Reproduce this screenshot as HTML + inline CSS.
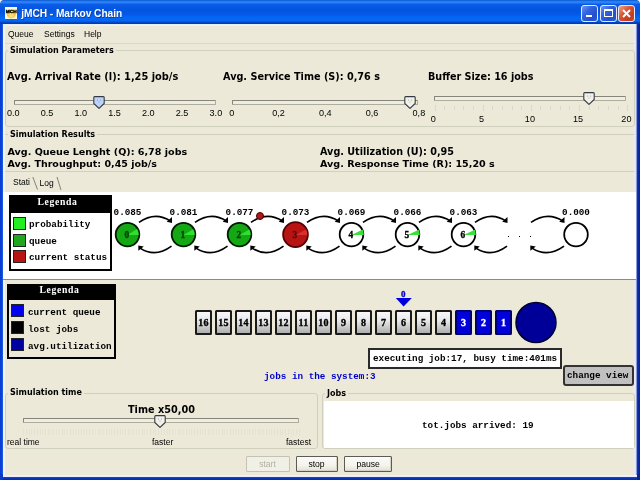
<!DOCTYPE html>
<html><head><meta charset="utf-8"><title>jMCH - Markov Chain</title>
<style>
html,body{margin:0;padding:0;}
body{width:640px;height:480px;overflow:hidden;position:relative;background:#0a3cc8;font-family:"DejaVu Sans Condensed","Liberation Sans",sans-serif;font-size:8.5px;color:#000;}
.a{position:absolute;white-space:nowrap;line-height:1;}
.t{font-family:"Liberation Sans",sans-serif;font-size:8.5px;color:#000;}
.m{font-family:"Liberation Mono",monospace;font-weight:bold;font-size:9.3px;}
.s{font-family:"Liberation Serif",serif;font-weight:bold;}
.grp{position:absolute;border:1px solid #d0d0bf;border-radius:3px;box-sizing:border-box;}
.gl{position:absolute;background:#ece9d8;padding:0 2px;font-family:"DejaVu Sans Condensed","Liberation Sans",sans-serif;font-weight:bold;font-size:8.95px;line-height:1;white-space:nowrap;}
.big{font-family:"DejaVu Sans","Liberation Sans",sans-serif;font-size:9.8px;font-weight:bold;}
.track{position:absolute;height:5px;box-sizing:border-box;border:1px solid #86857a;border-bottom-color:#aeac9c;border-right-color:#aeac9c;background:#efede0;border-radius:1px;}
.sl{position:absolute;font-size:9.1px;line-height:1;transform:translateX(-50%);white-space:nowrap;font-family:"Liberation Sans",sans-serif;color:#000;}
.qb{position:absolute;top:309.7px;width:17px;height:25.8px;box-sizing:border-box;border:2px solid #1a1a1a;border-radius:1.5px;background:linear-gradient(#f8f8f8,#e9e9e9 40%,#aeaeae);text-align:center;font-family:"Liberation Serif",serif;font-weight:bold;font-size:10px;line-height:21.6px;letter-spacing:0.2px;-webkit-text-stroke:0.35px currentColor;}
.qb.on{background:#0000dd;color:#fff;border-color:#000070;}
.btn{position:absolute;top:455.5px;height:16px;box-sizing:border-box;border:1px solid #5c5b55;background:linear-gradient(#fbfbf8,#f4f3ec 60%,#e3e1d4);box-shadow:inset -1px -1px 0 #d4d2c4;text-align:center;font-size:8.6px;line-height:14.6px;font-family:"Liberation Sans",sans-serif;border-radius:1px;color:#000;}
.sq{position:absolute;width:13px;height:13px;box-sizing:border-box;border:1px solid #222;}
</style></head><body><div id="win" style="position:absolute;left:0;top:0;width:640px;height:480px;will-change:transform;filter:blur(0.4px);">
<div class="a" style="left:0;top:0;width:640px;height:480px;background:#ece9d8;"></div>
<div class="a" style="left:0;top:0;width:640px;height:24px;background:linear-gradient(#0a58cc 0px,#2a7ef5 1.5px,#2a80f8 2.5px,#0a5ce6 4.5px,#0355e0 10px,#0558e6 14px,#0468f8 18px,#0465f0 21px,#0345c0 22.5px,#0038a8 24px);"></div>
<div class="a" style="left:21.2px;top:8.6px;font-family:'Liberation Sans',sans-serif;font-weight:bold;font-size:10.2px;letter-spacing:-0.05px;color:#fff;text-shadow:0.6px 0.6px 0.5px rgba(10,40,140,0.7);">jMCH - Markov Chain</div>
<svg class="a" style="left:5px;top:6.8px" width="12.3" height="12" viewBox="0 0 12.3 12"><rect x="0" y="0" width="12.3" height="12" fill="#fdf8e2"/><circle cx="6.3" cy="6.8" r="4.6" fill="#f3c63c"/><circle cx="6.3" cy="8.2" r="2.6" fill="#f8dc78"/><text x="6.15" y="6.3" font-family="Liberation Sans,sans-serif" font-weight="bold" font-size="4" text-anchor="middle" textLength="11" lengthAdjust="spacingAndGlyphs" fill="#000" stroke="#000" stroke-width="0.3">MCH</text></svg>
<div class="a" style="left:581.3px;top:5px;width:17px;height:17px;box-sizing:border-box;border:1px solid #e4ecfc;border-radius:3px;background:linear-gradient(135deg,#6a96f4 0%,#3564e0 35%,#2450d0 70%,#2a58d8 100%);"></div>
<div class="a" style="left:599.7px;top:5px;width:17px;height:17px;box-sizing:border-box;border:1px solid #e4ecfc;border-radius:3px;background:linear-gradient(135deg,#6a96f4 0%,#3564e0 35%,#2450d0 70%,#2a58d8 100%);"></div>
<div class="a" style="left:618px;top:5px;width:17px;height:17px;box-sizing:border-box;border:1px solid #e4ecfc;border-radius:3px;background:linear-gradient(135deg,#f0a888 0%,#dc5434 40%,#c43c1c 75%,#d04828 100%);"></div>
<div class="a" style="left:586px;top:14.8px;width:5.5px;height:2.7px;background:#fff;"></div>
<div class="a" style="left:604px;top:9.3px;width:8.7px;height:8.2px;box-sizing:border-box;border:1px solid #fff;border-top-width:2.2px;"></div>
<svg class="a" style="left:618px;top:5px" width="17" height="17" viewBox="0 0 17 17"><path d="M5 5 L12 12 M12 5 L5 12" stroke="#fff" stroke-width="1.9" stroke-linecap="butt"/></svg>
<svg class="a" style="left:0;top:0" width="640" height="6" viewBox="0 0 640 6"><path d="M0 0 H3 Q0.6 0.6 0 3.2 Z" fill="#f4f2ea"/><path d="M640 0 H637 Q639.4 0.6 640 3.2 Z" fill="#f4f2ea"/></svg>
<div class="a" style="left:5px;top:43px;width:629px;height:1px;background:#dbd8c8;"></div>
<div class="a" style="left:0;top:24px;width:5px;height:456px;background:linear-gradient(90deg,#0a3ccc 0,#0c44dc 2px,#2a66ec 3px,#eef2fc 3.4px,#f4f5f8 5px);"></div>
<div class="a" style="left:634px;top:24px;width:6px;height:456px;background:linear-gradient(90deg,#eeeef4 0,#dde0f6 2.2px,#1a3cb8 2.9px,#0a2aa6 4px,#08248f 6px);"></div>
<div class="a" style="left:0;top:474.5px;width:640px;height:5.5px;background:linear-gradient(#f4f5f8 0,#e8ecfa 1.8px,#1a44c4 2.4px,#0a32b4 3.5px,#082890 5.5px);"></div>
<div class="a" style="left:0;top:474px;width:3px;height:6px;background:#0a3ccc;"></div>
<div class="a" style="left:637px;top:474px;width:3px;height:6px;background:#08248f;"></div>
<div class="a" style="left:3px;top:24px;width:633px;height:1.5px;background:linear-gradient(#e4f0fc,#f2f2ec);"></div>
<div class="a t" style="left:8px;top:29.5px;">Queue</div>
<div class="a t" style="left:44px;top:29.5px;">Settings</div>
<div class="a t" style="left:84px;top:29.5px;">Help</div>
<div class="grp" style="left:5px;top:50px;width:630px;height:77px;"></div>
<div class="gl" style="left:8px;top:46px;">Simulation Parameters</div>
<div class="a big" style="left:7px;top:71.5px;font-size:9.84px;">Avg. Arrival Rate (l): 1,25 job/s</div>
<div class="a big" style="left:223px;top:71.5px;font-size:9.68px;">Avg. Service Time (S): 0,76 s</div>
<div class="a big" style="left:428px;top:71.5px;font-size:9.63px;">Buffer Size: 16 jobs</div>
<div class="track" style="left:14px;top:100px;width:202px;"></div>
<svg class="a" style="left:93px;top:96px" width="12" height="13" viewBox="0 0 12 13"><path d="M1.6 0.6 H10.4 Q11.2 0.6 11.2 1.6 V7.4 L6 12.4 L0.8 7.4 V1.6 Q0.8 0.6 1.6 0.6 Z" fill="#bdd3f7" stroke="#333a44" stroke-width="1.1"/><circle cx="4.5" cy="4" r="0.55" fill="#8098c0"/><circle cx="7.5" cy="4" r="0.55" fill="#8098c0"/><circle cx="6" cy="6" r="0.55" fill="#8098c0"/></svg>
<div class="sl" style="left:13.3px;top:109.2px;">0.0</div>
<div class="sl" style="left:47.1px;top:109.2px;">0.5</div>
<div class="sl" style="left:80.8px;top:109.2px;">1.0</div>
<div class="sl" style="left:114.6px;top:109.2px;">1.5</div>
<div class="sl" style="left:148.3px;top:109.2px;">2.0</div>
<div class="sl" style="left:182.1px;top:109.2px;">2.5</div>
<div class="sl" style="left:215.9px;top:109.2px;">3.0</div>
<div class="track" style="left:232px;top:100px;width:186px;"></div>
<svg class="a" style="left:404px;top:96px" width="12" height="13" viewBox="0 0 12 13"><path d="M1.6 0.6 H10.4 Q11.2 0.6 11.2 1.6 V7.4 L6 12.4 L0.8 7.4 V1.6 Q0.8 0.6 1.6 0.6 Z" fill="#f2f1e8" stroke="#333a44" stroke-width="1.1"/><circle cx="4.5" cy="4" r="0.55" fill="#9a9a90"/><circle cx="7.5" cy="4" r="0.55" fill="#9a9a90"/><circle cx="6" cy="6" r="0.55" fill="#9a9a90"/></svg>
<div class="sl" style="left:231.7px;top:109.2px;">0</div>
<div class="sl" style="left:278.5px;top:109.2px;">0,2</div>
<div class="sl" style="left:325.3px;top:109.2px;">0,4</div>
<div class="sl" style="left:372.1px;top:109.2px;">0,6</div>
<div class="sl" style="left:418.9px;top:109.2px;">0,8</div>
<div class="track" style="left:434px;top:96px;width:192px;"></div>
<svg class="a" style="left:583px;top:92px" width="12" height="13" viewBox="0 0 12 13"><path d="M1.6 0.6 H10.4 Q11.2 0.6 11.2 1.6 V7.4 L6 12.4 L0.8 7.4 V1.6 Q0.8 0.6 1.6 0.6 Z" fill="#f2f1e8" stroke="#333a44" stroke-width="1.1"/><circle cx="4.5" cy="4" r="0.55" fill="#9a9a90"/><circle cx="7.5" cy="4" r="0.55" fill="#9a9a90"/><circle cx="6" cy="6" r="0.55" fill="#9a9a90"/></svg>
<div class="a" style="left:434.5px;top:105px;width:1px;height:6px;background:#dbd8c8;"></div><div class="a" style="left:444.1px;top:106px;width:1px;height:4px;background:#dbd8c8;"></div><div class="a" style="left:453.8px;top:106px;width:1px;height:4px;background:#dbd8c8;"></div><div class="a" style="left:463.4px;top:106px;width:1px;height:4px;background:#dbd8c8;"></div><div class="a" style="left:473.0px;top:106px;width:1px;height:4px;background:#dbd8c8;"></div><div class="a" style="left:482.6px;top:105px;width:1px;height:6px;background:#dbd8c8;"></div><div class="a" style="left:492.3px;top:106px;width:1px;height:4px;background:#dbd8c8;"></div><div class="a" style="left:501.9px;top:106px;width:1px;height:4px;background:#dbd8c8;"></div><div class="a" style="left:511.5px;top:106px;width:1px;height:4px;background:#dbd8c8;"></div><div class="a" style="left:521.2px;top:106px;width:1px;height:4px;background:#dbd8c8;"></div><div class="a" style="left:530.8px;top:105px;width:1px;height:6px;background:#dbd8c8;"></div><div class="a" style="left:540.4px;top:106px;width:1px;height:4px;background:#dbd8c8;"></div><div class="a" style="left:550.1px;top:106px;width:1px;height:4px;background:#dbd8c8;"></div><div class="a" style="left:559.7px;top:106px;width:1px;height:4px;background:#dbd8c8;"></div><div class="a" style="left:569.3px;top:106px;width:1px;height:4px;background:#dbd8c8;"></div><div class="a" style="left:579.0px;top:105px;width:1px;height:6px;background:#dbd8c8;"></div><div class="a" style="left:588.6px;top:106px;width:1px;height:4px;background:#dbd8c8;"></div><div class="a" style="left:598.2px;top:106px;width:1px;height:4px;background:#dbd8c8;"></div><div class="a" style="left:607.8px;top:106px;width:1px;height:4px;background:#dbd8c8;"></div><div class="a" style="left:617.5px;top:106px;width:1px;height:4px;background:#dbd8c8;"></div><div class="a" style="left:627.1px;top:105px;width:1px;height:6px;background:#dbd8c8;"></div>
<div class="sl" style="left:433.4px;top:115px;">0</div>
<div class="sl" style="left:481.6px;top:115px;">5</div>
<div class="sl" style="left:529.9px;top:115px;">10</div>
<div class="sl" style="left:578.1px;top:115px;">15</div>
<div class="sl" style="left:626.4px;top:115px;">20</div>
<div class="grp" style="left:5px;top:134px;width:630px;height:38px;border-left-color:transparent;border-right-color:transparent;border-radius:0"></div>
<div class="gl" style="left:8px;top:130px;">Simulation Results</div>
<div class="a big" style="left:7.5px;top:146.5px;font-size:9.59px;">Avg. Queue Lenght (Q): 6,78 jobs</div>
<div class="a big" style="left:7.5px;top:158.9px;font-size:9.51px;">Avg. Throughput: 0,45 job/s</div>
<div class="a big" style="left:320px;top:146.5px;font-size:9.63px;">Avg. Utilization (U): 0,95</div>
<div class="a big" style="left:320px;top:158.9px;font-size:9.59px;">Avg. Response Time (R): 15,20 s</div>
<div class="a t" style="left:13px;top:178px;">Stati</div>
<div class="a t" style="left:39.5px;top:179px;">Log</div>
<svg class="a" style="left:3px;top:172px" width="70" height="21" viewBox="0 0 70 21"><path d="M29.8 5 L34.5 17.5 M54 5 L58 18" stroke="#77766a" stroke-width="0.9" fill="none"/></svg>
<div class="a" style="left:3px;top:192px;width:633px;height:87px;background:#fff;border-bottom:1px solid #8c8b80;"></div>
<div class="a" style="left:8.6px;top:195px;width:103.4px;height:75.5px;box-sizing:border-box;border:2px solid #000;background:#fff;"></div>
<div class="a" style="left:8.6px;top:195px;width:103.4px;height:18px;background:#000;"></div>
<div class="a s" style="left:5.5px;top:196.8px;width:104px;text-align:center;color:#fff;font-size:9.7px;letter-spacing:0.65px;">Legenda</div>
<div class="sq" style="left:12.6px;top:217.0px;background:#22ee22;"></div>
<div class="a m" style="left:29px;top:220.3px;">probability</div>
<div class="sq" style="left:12.6px;top:233.5px;background:#1fa81f;"></div>
<div class="a m" style="left:29px;top:236.8px;">queue</div>
<div class="sq" style="left:12.6px;top:250.0px;background:#b81414;"></div>
<div class="a m" style="left:29px;top:253.3px;">current status</div>
<svg class="a" style="left:0;top:192px" width="640" height="86" viewBox="0 192 640 86"><defs><marker id="ah" markerWidth="6" markerHeight="6" refX="3" refY="3" orient="auto" markerUnits="userSpaceOnUse"><path d="M0 0 L6 3 L0 6 Z" fill="#000"/></marker></defs><path d="M139.0 222.35 Q155.25 211.1 170.5 221.1" fill="none" stroke="#000" stroke-width="1.7"/><path d="M172.0 217.0 L172.0 223.1 L166.7 221.79999999999998 Z" fill="#000"/><path d="M171.5 246.1 Q155.25 258.1 140.0 248.1" fill="none" stroke="#000" stroke-width="1.7"/><path d="M138.3 245.6 L138.3 250.79999999999998 L143.8 246.4 Z" fill="#000"/><path d="M195.0 222.35 Q211.25 211.1 226.5 221.1" fill="none" stroke="#000" stroke-width="1.7"/><path d="M228.0 217.0 L228.0 223.1 L222.7 221.79999999999998 Z" fill="#000"/><path d="M227.5 246.1 Q211.25 258.1 196.0 248.1" fill="none" stroke="#000" stroke-width="1.7"/><path d="M194.3 245.6 L194.3 250.79999999999998 L199.8 246.4 Z" fill="#000"/><path d="M251.0 222.35 Q267.25 211.1 282.5 221.1" fill="none" stroke="#000" stroke-width="1.7"/><path d="M284.0 217.0 L284.0 223.1 L278.7 221.79999999999998 Z" fill="#000"/><path d="M283.5 246.1 Q267.25 258.1 252.0 248.1" fill="none" stroke="#000" stroke-width="1.7"/><path d="M250.3 245.6 L250.3 250.79999999999998 L255.8 246.4 Z" fill="#000"/><path d="M307.0 222.35 Q323.25 211.1 338.5 221.1" fill="none" stroke="#000" stroke-width="1.7"/><path d="M340.0 217.0 L340.0 223.1 L334.7 221.79999999999998 Z" fill="#000"/><path d="M339.5 246.1 Q323.25 258.1 308.0 248.1" fill="none" stroke="#000" stroke-width="1.7"/><path d="M306.3 245.6 L306.3 250.79999999999998 L311.8 246.4 Z" fill="#000"/><path d="M363.0 222.35 Q379.25 211.1 394.5 221.1" fill="none" stroke="#000" stroke-width="1.7"/><path d="M396.0 217.0 L396.0 223.1 L390.7 221.79999999999998 Z" fill="#000"/><path d="M395.5 246.1 Q379.25 258.1 364.0 248.1" fill="none" stroke="#000" stroke-width="1.7"/><path d="M362.3 245.6 L362.3 250.79999999999998 L367.8 246.4 Z" fill="#000"/><path d="M419.0 222.35 Q435.25 211.1 450.5 221.1" fill="none" stroke="#000" stroke-width="1.7"/><path d="M452.0 217.0 L452.0 223.1 L446.7 221.79999999999998 Z" fill="#000"/><path d="M451.5 246.1 Q435.25 258.1 420.0 248.1" fill="none" stroke="#000" stroke-width="1.7"/><path d="M418.3 245.6 L418.3 250.79999999999998 L423.8 246.4 Z" fill="#000"/><path d="M475.0 222.35 Q491.0 211.1 506 221.1" fill="none" stroke="#000" stroke-width="1.7"/><path d="M507.5 217.0 L507.5 223.1 L502.2 221.79999999999998 Z" fill="#000"/><path d="M507 246.1 Q491.0 258.1 476.0 248.1" fill="none" stroke="#000" stroke-width="1.7"/><path d="M474.3 245.6 L474.3 250.79999999999998 L479.8 246.4 Z" fill="#000"/><path d="M531 222.35 Q547.5 211.1 563 221.1" fill="none" stroke="#000" stroke-width="1.7"/><path d="M564.5 217.0 L564.5 223.1 L559.2 221.79999999999998 Z" fill="#000"/><path d="M564 246.1 Q547.5 258.1 532 248.1" fill="none" stroke="#000" stroke-width="1.7"/><path d="M530.3 245.6 L530.3 250.79999999999998 L535.8 246.4 Z" fill="#000"/><circle cx="127.5" cy="234.6" r="11.8" fill="#14a814" stroke="#021a02" stroke-width="1.8"/><path d="M127.5 234.9 L138.7 234.9 A11.200000000000001 11.200000000000001 0 0 0 137.14 228.90 Z" fill="#2fe02f"/><text x="126.9" y="238.0" text-anchor="middle" font-family="Liberation Serif,serif" font-weight="bold" font-size="9.4" fill="#084008" stroke="#084008" stroke-width="0.35">0</text><text x="127.5" y="214.5" text-anchor="middle" font-family="Liberation Mono,monospace" font-weight="bold" font-size="9.3" fill="#000">0.085</text><circle cx="183.5" cy="234.6" r="11.8" fill="#14a814" stroke="#021a02" stroke-width="1.8"/><path d="M183.5 234.9 L194.7 234.9 A11.200000000000001 11.200000000000001 0 0 0 193.28 229.14 Z" fill="#2fe02f"/><text x="182.9" y="238.0" text-anchor="middle" font-family="Liberation Serif,serif" font-weight="bold" font-size="9.4" fill="#084008" stroke="#084008" stroke-width="0.35">1</text><text x="183.5" y="214.5" text-anchor="middle" font-family="Liberation Mono,monospace" font-weight="bold" font-size="9.3" fill="#000">0.081</text><circle cx="239.5" cy="234.6" r="11.8" fill="#14a814" stroke="#021a02" stroke-width="1.8"/><path d="M239.5 234.9 L250.7 234.9 A11.200000000000001 11.200000000000001 0 0 0 249.41 229.39 Z" fill="#2fe02f"/><text x="238.9" y="238.0" text-anchor="middle" font-family="Liberation Serif,serif" font-weight="bold" font-size="9.4" fill="#084008" stroke="#084008" stroke-width="0.35">2</text><text x="239.5" y="214.5" text-anchor="middle" font-family="Liberation Mono,monospace" font-weight="bold" font-size="9.3" fill="#000">0.077</text><circle cx="295.5" cy="234.6" r="12.4" fill="#b81414" stroke="#500" stroke-width="1.8"/><path d="M295.5 234.9 L307.3 234.9 A11.8 11.8 0 0 0 306.08 229.38 Z" fill="#d83030"/><text x="294.9" y="238.0" text-anchor="middle" font-family="Liberation Serif,serif" font-weight="bold" font-size="9.4" fill="#5c0808" stroke="#5c0808" stroke-width="0.35">3</text><text x="295.5" y="214.5" text-anchor="middle" font-family="Liberation Mono,monospace" font-weight="bold" font-size="9.3" fill="#000">0.073</text><circle cx="351.5" cy="234.6" r="11.8" fill="#fff" stroke="#000" stroke-width="1.8"/><path d="M351.5 234.9 L363.8 234.9 A12.3 12.3 0 0 0 362.66 229.43 Z" fill="#3be03b"/><text x="350.9" y="238.0" text-anchor="middle" font-family="Liberation Serif,serif" font-weight="bold" font-size="9.4" fill="#000" stroke="#000" stroke-width="0.35">4</text><text x="351.5" y="214.5" text-anchor="middle" font-family="Liberation Mono,monospace" font-weight="bold" font-size="9.3" fill="#000">0.069</text><circle cx="407.5" cy="234.6" r="11.8" fill="#fff" stroke="#000" stroke-width="1.8"/><path d="M407.5 234.9 L419.8 234.9 A12.3 12.3 0 0 0 418.76 229.64 Z" fill="#3be03b"/><text x="406.9" y="238.0" text-anchor="middle" font-family="Liberation Serif,serif" font-weight="bold" font-size="9.4" fill="#000" stroke="#000" stroke-width="0.35">5</text><text x="407.5" y="214.5" text-anchor="middle" font-family="Liberation Mono,monospace" font-weight="bold" font-size="9.3" fill="#000">0.066</text><circle cx="463.5" cy="234.6" r="11.8" fill="#fff" stroke="#000" stroke-width="1.8"/><path d="M463.5 234.9 L475.8 234.9 A12.3 12.3 0 0 0 474.85 229.86 Z" fill="#3be03b"/><text x="462.9" y="238.0" text-anchor="middle" font-family="Liberation Serif,serif" font-weight="bold" font-size="9.4" fill="#000" stroke="#000" stroke-width="0.35">6</text><text x="463.5" y="214.5" text-anchor="middle" font-family="Liberation Mono,monospace" font-weight="bold" font-size="9.3" fill="#000">0.063</text><circle cx="576" cy="234.6" r="11.8" fill="#fff" stroke="#000" stroke-width="1.8"/><text x="576" y="214.5" text-anchor="middle" font-family="Liberation Mono,monospace" font-weight="bold" font-size="9.3" fill="#000">0.000</text><circle cx="260" cy="216" r="3.5" fill="#b01818" stroke="#400" stroke-width="1"/><rect x="508" y="236" width="1" height="1" fill="#000"/><rect x="519" y="236" width="1" height="1" fill="#000"/><rect x="530" y="236" width="1" height="1" fill="#000"/></svg>
<div class="a" style="left:7px;top:284px;width:109px;height:75px;box-sizing:border-box;border:2px solid #000;background:#ece9d8;"></div>
<div class="a" style="left:7px;top:284px;width:109px;height:16px;background:#000;"></div>
<div class="a s" style="left:5px;top:284.6px;width:109px;text-align:center;color:#fff;font-size:9.7px;letter-spacing:0.65px;">Legenda</div>
<div class="sq" style="left:11px;top:304.0px;background:#0000ee;"></div>
<div class="a m" style="left:28px;top:308.3px;">current queue</div>
<div class="sq" style="left:11px;top:320.8px;background:#000;"></div>
<div class="a m" style="left:28px;top:325.1px;">lost jobs</div>
<div class="sq" style="left:11px;top:337.6px;background:#0000a0;"></div>
<div class="a m" style="left:28px;top:341.90000000000003px;">avg.utilization</div>
<div class="qb" style="left:195px;">16</div>
<div class="qb" style="left:215px;">15</div>
<div class="qb" style="left:235px;">14</div>
<div class="qb" style="left:255px;">13</div>
<div class="qb" style="left:275px;">12</div>
<div class="qb" style="left:295px;">11</div>
<div class="qb" style="left:315px;">10</div>
<div class="qb" style="left:335px;">9</div>
<div class="qb" style="left:355px;">8</div>
<div class="qb" style="left:375px;">7</div>
<div class="qb" style="left:395px;">6</div>
<div class="qb" style="left:415px;">5</div>
<div class="qb" style="left:435px;">4</div>
<div class="qb on" style="left:455px;">3</div>
<div class="qb on" style="left:475px;">2</div>
<div class="qb on" style="left:495px;">1</div>
<svg class="a" style="left:510.6px;top:298px" width="50" height="50" viewBox="0 0 50 50"><circle cx="25" cy="24.5" r="20" fill="#000099" stroke="#000030" stroke-width="1.5"/></svg>
<div class="a s" style="left:401px;top:290px;font-size:9px;color:#0000cc;-webkit-text-stroke:0.35px #0000cc;">0</div>
<svg class="a" style="left:395px;top:297px" width="18" height="10" viewBox="0 0 18 10"><path d="M0.8 1 H16.8 L8.6 9.4 Z" fill="#0000dd"/></svg>
<div class="a" style="left:367.6px;top:348px;width:194.2px;height:21.4px;box-sizing:border-box;border:2px solid #2a2a2a;background:#fff;"></div>
<div class="a m" style="left:373px;top:354px;">executing job:17, busy time:401ms</div>
<div class="a m" style="left:264px;top:372.3px;color:#0000cc;">jobs in the system:3</div>
<div class="a" style="left:563px;top:365px;width:71px;height:21px;box-sizing:border-box;border:2px solid #333;border-radius:3px;background:#c0c0c0;"></div>
<div class="a m" style="left:567px;top:371px;">change view</div>
<div class="grp" style="left:5px;top:392.5px;width:313px;height:56.5px;"></div>
<div class="gl" style="left:8px;top:388.4px;">Simulation time</div>
<div class="a big" style="left:128px;top:404.5px;font-size:9.71px;">Time x50,00</div>
<div class="track" style="left:23px;top:418.3px;width:276px;height:4.4px;"></div>
<svg class="a" style="left:154px;top:414.5px" width="12" height="13" viewBox="0 0 12 13"><path d="M1.6 0.6 H10.4 Q11.2 0.6 11.2 1.6 V7.4 L6 12.4 L0.8 7.4 V1.6 Q0.8 0.6 1.6 0.6 Z" fill="#f2f1e8" stroke="#333a44" stroke-width="1.1"/><circle cx="4.5" cy="4" r="0.55" fill="#9a9a90"/><circle cx="7.5" cy="4" r="0.55" fill="#9a9a90"/><circle cx="6" cy="6" r="0.55" fill="#9a9a90"/></svg>
<div class="a" style="left:23px;top:428.5px;width:277px;height:6.5px;background:repeating-linear-gradient(90deg,#dfdccc 0,#dfdccc 1px,#ece9d8 1px,#ece9d8 2.76px);opacity:0.6"></div>
<div class="a t" style="left:7px;top:438px;">real time</div>
<div class="a t" style="left:152px;top:438px;">faster</div>
<div class="a t" style="left:286px;top:438px;">fastest</div>
<div class="grp" style="left:322px;top:392.5px;width:313px;height:56.5px;"></div>
<div class="gl" style="left:325px;top:388.6px;">Jobs</div>
<div class="a" style="left:324px;top:401px;width:310px;height:47px;background:#fff;"></div>
<div class="a m" style="left:422px;top:420.6px;">tot.jobs arrived: 19</div>
<div class="btn" style="left:245.5px;width:44px;color:#b4b1a2;border-color:#c4c2b4;background:#f1f0e6;box-shadow:none;">start</div>
<div class="btn" style="left:295.5px;width:42px;">stop</div>
<div class="btn" style="left:343.7px;width:48.8px;">pause</div>
</div></body></html>
